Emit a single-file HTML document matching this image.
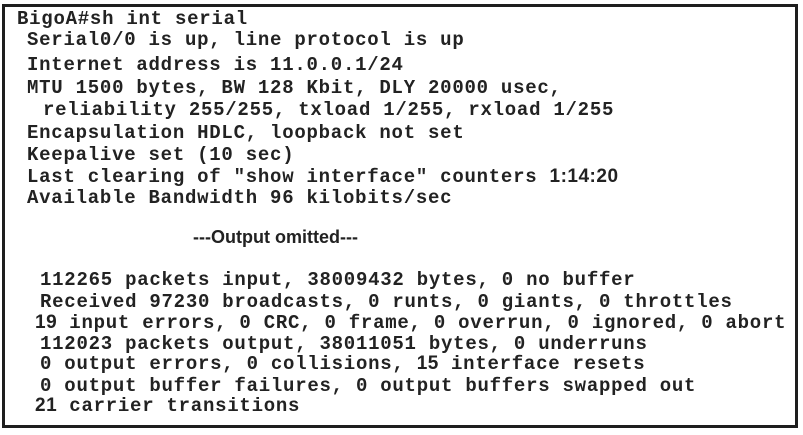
<!DOCTYPE html>
<html><head><meta charset="utf-8"><style>
html,body{margin:0;padding:0;background:#fff;}
body{width:803px;height:435px;position:relative;overflow:hidden;}
.f{position:absolute;left:2px;top:4px;width:790px;height:418px;border:3px solid #1e1e1e;}
.l{position:absolute;font-family:"Liberation Mono",monospace;font-weight:bold;font-size:19px;letter-spacing:0.75px;line-height:22px;color:#222;white-space:pre;}
.a{font-family:"Liberation Sans",sans-serif;letter-spacing:0.5px;font-size:19px;font-weight:bold;}
.om{position:absolute;left:193px;top:227px;font-family:"Liberation Sans",sans-serif;font-weight:bold;font-size:18px;line-height:20px;color:#222;}
</style></head><body>
<div class="f"></div>
<div class="l" style="left:17px;top:8px">BigoA#sh int serial</div>
<div class="l" style="left:27px;top:29px">Serial0/0 is up, line protocol is up</div>
<div class="l" style="left:27px;top:54px">Internet address is 11.0.0.1/24</div>
<div class="l" style="left:27px;top:77px">MTU 1500 bytes, BW 128 Kbit, DLY 20000 usec,</div>
<div class="l" style="left:43px;top:99px">reliability 255/255, txload 1/255, rxload 1/255</div>
<div class="l" style="left:27px;top:122px">Encapsulation HDLC, loopback not set</div>
<div class="l" style="left:27px;top:144px">Keepalive set (10 sec)</div>
<div class="l" style="left:27px;top:166px">Last clearing of "show interface" counters <span class="a">1:14:20</span></div>
<div class="l" style="left:27px;top:187px">Available Bandwidth 96 kilobits/sec</div>
<div class="om">---Output omitted---</div>
<div class="l" style="left:40px;top:269px">112265 packets input, 38009432 bytes, 0 no buffer</div>
<div class="l" style="left:40px;top:291px">Received 97230 broadcasts, 0 runts, 0 giants, 0 throttles</div>
<div class="l" style="left:35px;top:312px"><span class="a">19</span> input errors, 0 CRC, 0 frame, 0 overrun, 0 ignored, 0 abort</div>
<div class="l" style="left:40px;top:333px">112023 packets output, 38011051 bytes, 0 underruns</div>
<div class="l" style="left:40px;top:353px">0 output errors, 0 collisions, <span class="a">15</span> interface resets</div>
<div class="l" style="left:40px;top:375px">0 output buffer failures, 0 output buffers swapped out</div>
<div class="l" style="left:35px;top:395px"><span class="a">21</span> carrier transitions</div>
</body></html>
